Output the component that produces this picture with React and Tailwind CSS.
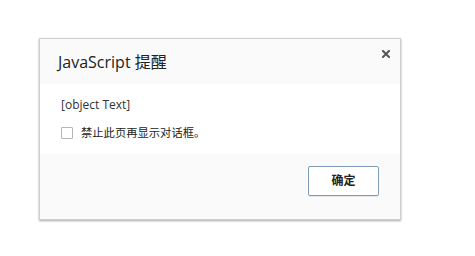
import React from 'react';

// Chrome-style alert dialog
export default function App() {
  return (
    <div className="w-[475px] h-[256px] bg-white overflow-hidden pt-[38px] pl-[39px] font-['Segoe_UI','Open_Sans','Noto_Sans_CJK_SC',sans-serif]">
      <div className="relative w-[362px] h-[182px] bg-white border border-[#cfcfcf] shadow-[0_1px_2px_rgba(0,0,0,0.35)] flex flex-col">
        <div className="h-[45px] bg-[#fafafa] flex items-center pl-[18px] pt-[1px]">
          <span className="text-[16px] text-[#222]">JavaScript 提醒</span>
        </div>
        <button className="absolute right-[8px] top-[9px] w-[12px] h-[12px] flex items-center justify-center">
          <svg width="8" height="8" viewBox="0 0 8 8">
            <path d="M1 1L7 7M7 1L1 7" stroke="#555" strokeWidth="2" strokeLinecap="square" />
          </svg>
        </button>
        <div className="flex-1 flex flex-col pl-[21px] pt-[13px] bg-white">
          <div className="text-[12px] text-[#333] leading-[16px]">[object Text]</div>
          <label className="flex items-center mt-[12px] gap-[8px]">
            <span className="w-[12px] h-[12px] border border-[#b5b5b5] rounded-[1px] bg-white" />
            <span className="text-[11.3px] text-[#222] leading-[16px]">禁止此页再显示对话框。</span>
          </label>
        </div>
        <div className="h-[65px] bg-[#fafafa] flex justify-end items-start pt-[12px] pr-[21px]">
          <button className="w-[71px] h-[30px] border border-[#7f9db9] rounded-[2px] bg-white text-[12px] font-bold text-[#222] shadow-[0_1px_0_rgba(0,0,0,0.08)]">
            确定
          </button>
        </div>
      </div>
    </div>
  );
}
